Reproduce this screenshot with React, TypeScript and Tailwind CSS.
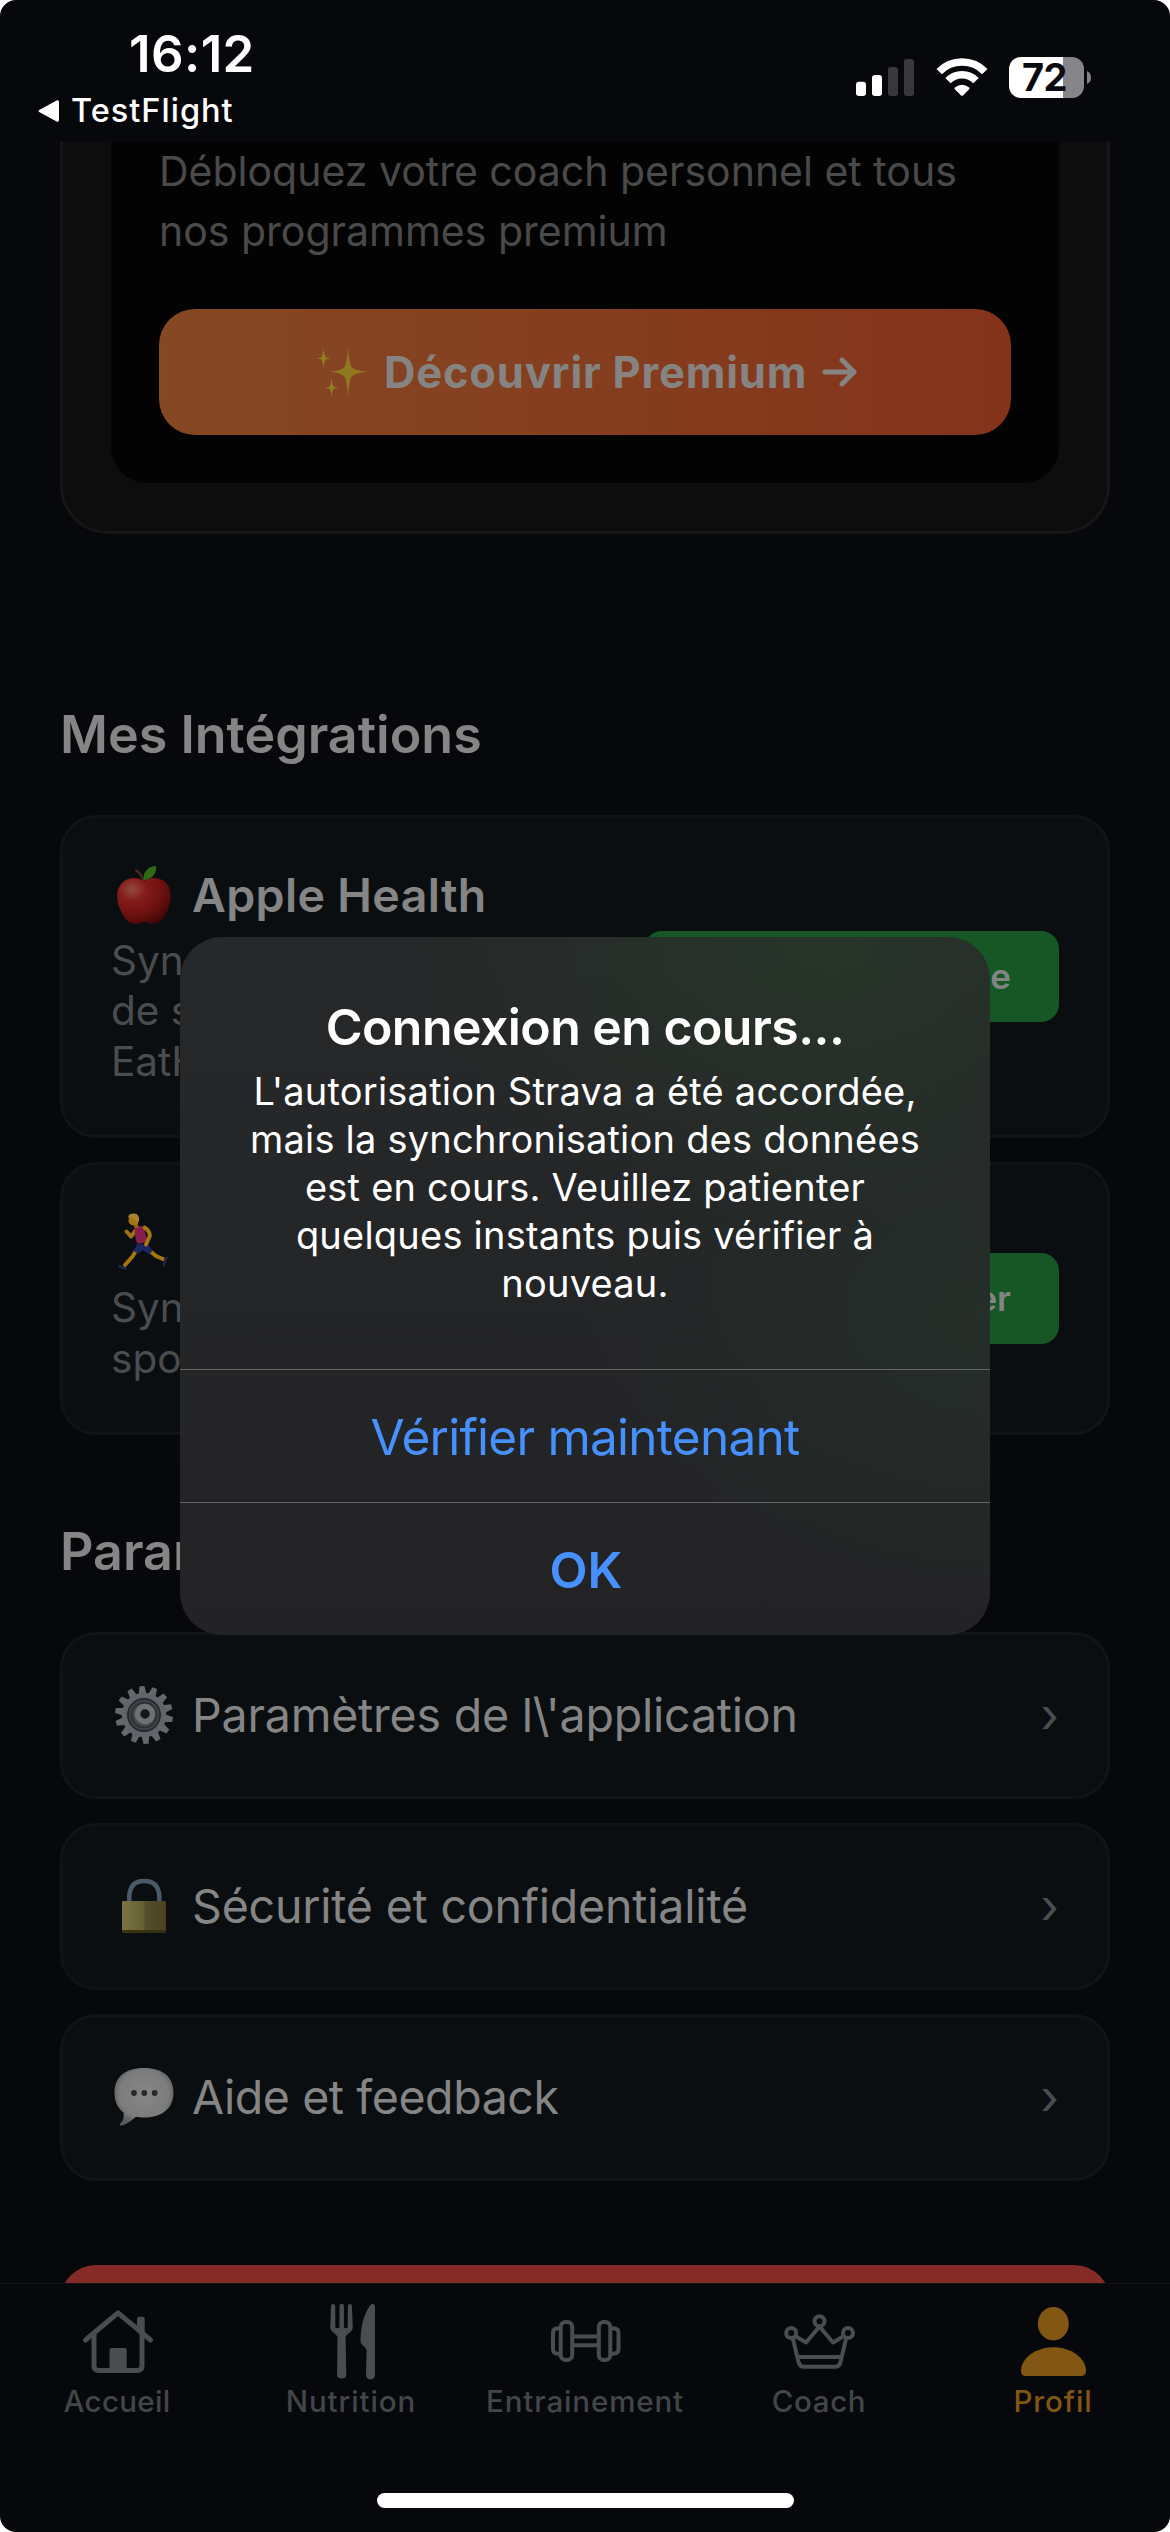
import type { ReactNode } from "react";

/* ---------- status bar ---------- */

function StatusBar() {
  return (
    <header className="flex h-[141px] shrink-0 justify-between pr-[79px] pl-[38px] text-white">
      <div className="flex flex-col pt-[28px]">
        <div className="ml-[91px] text-[51px] leading-[51px] font-semibold tracking-[0.4px]">16:12</div>
        <div className="mt-3 flex h-10 items-center">
          <svg width="22" height="24" viewBox="0 0 22 24">
            <path d="M1.2 11 L18.6 1.6 Q21 .6 21 3 V21 Q21 23.4 18.6 22.4 L1.2 13 Q-.2 12 1.2 11z" fill="#fff" />
          </svg>
          <span className="ml-[11px] text-[32.5px] leading-10 font-[450] tracking-[1px]">TestFlight</span>
        </div>
      </div>
      <div className="flex h-[41px] items-start pt-[57px]">
        <svg width="58" height="41" viewBox="0 0 58 41">
          <rect x="0" y="24.7" width="10" height="14.3" rx="3" fill="#fff" />
          <rect x="16" y="18" width="10" height="21" rx="3" fill="#fff" />
          <rect x="32" y="10" width="10" height="29" rx="3" fill="#39393c" />
          <rect x="48" y="2" width="10" height="37" rx="3" fill="#39393c" />
        </svg>
        <svg className="ml-[22px]" width="52" height="41" viewBox="0 0 52 41">
          <g fill="none" stroke="#fff" strokeWidth="7.6">
            <path d="M3.2 14.6 A32 32 0 0 1 48.8 14.6" />
            <path d="M12 23.6 A19.6 19.6 0 0 1 40 23.6" />
          </g>
          <path d="M18.8 30.6 Q26 24.8 33.2 30.6 Q34 31.4 33.2 32.2 L26.9 38.6 Q26 39.4 25.1 38.6 L18.8 32.2 Q18 31.4 18.8 30.6z" fill="#fff" />
        </svg>
        <div className="ml-[21px] flex h-[41px] w-[75px] items-center justify-center rounded-[12px] bg-linear-to-r from-white from-[72%] to-[#868689] to-[72%] pr-[4px] text-[38px] leading-[41px] font-bold tracking-[-0.5px] text-[#0a0b0f]">
          72
        </div>
        <svg className="mt-[14px] ml-[3px]" width="4" height="13" viewBox="0 0 4 13">
          <path d="M0 0 Q4 2 4 6.500 T0 13z" fill="#868689" />
        </svg>
      </div>
    </header>
  );
}

/* ---------- pictograms ---------- */

function Sparkles() {
  return (
    <svg width="54" height="52" viewBox="0 0 54 52" fill="#8f7f1f">
      <path d="M32 1 Q32.800 17 36 21.500 Q40 25 52 25.700 Q40 26.500 36 30 Q32.800 34 32 51 Q31.200 34 28 30 Q24 26.500 13 25.700 Q24 25 28 21.500 Q31.200 17 32 1z" opacity="0.9" />
      <path d="M7.500 1 Q8 10 10 11.500 L15 12.300 L10 13.300 Q8 15 7.500 24 Q7 15 5 13.300 L0 12.300 L5 11.500 Q7 10 7.500 1z" />
      <path d="M15.500 31 Q16 39.500 18 40.900 L23 41.700 L18 42.600 Q16 44 15.500 52 Q15 44 13 42.600 L8 41.700 L13 40.900 Q15 39.500 15.500 31z" />
    </svg>
  );
}

function AppleIcon() {
  return (
    <svg width="60" height="58" viewBox="0 0 60 58">
      <defs>
        <radialGradient id="apple" cx="0.28" cy="0.25" r="0.85">
          <stop offset="0" stopColor="#8f4a43" />
          <stop offset="0.3" stopColor="#851c19" />
          <stop offset="0.7" stopColor="#6a0f0f" />
          <stop offset="1" stopColor="#3d0606" />
        </radialGradient>
      </defs>
      <path
        d="M30 15 C36 11 44 11 50 15 C58 21 58.500 33 54 43 C50 53 45 58 39 58 C35 58 33.500 56 30 56 C26.500 56 25 58 21 58 C15 58 10 53 6 43 C1.500 33 2 21 10 15 C16 11 24 11 30 15z"
        fill="url(#apple)"
      />
      <path d="M29.500 15 Q28 8 21.500 4" fill="none" stroke="#4d2a1b" strokeWidth="2.200" />
      <path d="M30 14 C28 7 34 0 42 0 C43 8 38 13 30 14z" fill="#2f6a12" />
    </svg>
  );
}

function RunnerIcon() {
  return (
    <svg width="60" height="58" viewBox="0 0 60 58" fill="none" strokeLinecap="round" strokeLinejoin="round">
      <path d="M22 17 L17 23.500 L12.500 18.500" stroke="#9d7010" strokeWidth="4" />
      <path d="M22.500 37 L18.500 43.500 L11 52" stroke="#a37410" strokeWidth="4" />
      <path d="M36 38 L42 43 L50 46.500" stroke="#a37410" strokeWidth="4" />
      <path d="M21 13.500 Q27 11.500 30 14.500 L33 27 Q29 32 23 30 Q20 22 21 13.500z" fill="#861f4a" />
      <path d="M23.500 30.500 Q29 32.500 32.500 30 L38.500 37.500 L35 41.500 L29 37 L24 40.500 L19.500 38z" fill="#1c2566" />
      <path d="M30.500 14.500 Q36 18 35.800 23 L32 31.500" stroke="#a67612" strokeWidth="4" />
      <path d="M4.500 51.500 L13 54.500 L12 57 L4.500 54.500z" fill="#20283f" />
      <path d="M54 43.500 L50 54.500 L48.500 53 L50.500 45z" fill="#20283f" />
      <path d="M19 9 L24 8 L24 15 L20.500 15z" fill="#94670f" />
      <circle cx="19.500" cy="7.500" r="5" fill="#a67612" />
      <path d="M14 4.500 Q14.500 .3 20 .4 Q26 .6 25 8.500 L22 9 Q21.500 4.500 14 4.500z" fill="#a9842d" />
    </svg>
  );
}

const TEETH = Array.from({ length: 14 }, (_, i) => (i * 360) / 14);

function GearIcon() {
  return (
    <svg width="60" height="60" viewBox="0 0 60 60">
      <g fill="#62686c">
        {TEETH.map((angle) => (
          <path key={angle} d="M26 10 L27.500 1 H32.500 L34 10z" transform={`rotate(${angle - 4} 30 30)`} />
        ))}
      </g>
      <circle cx="30" cy="30" r="19.500" fill="#44484b" stroke="#5f656a" strokeWidth="5.500" />
      <circle cx="30" cy="30" r="16" fill="none" stroke="#25292c" strokeWidth="1.800" />
      <circle cx="30" cy="30" r="12.500" fill="none" stroke="#2d3134" strokeWidth="2" />
      <circle cx="31" cy="29" r="7.500" fill="#15181a" stroke="#6b7175" strokeWidth="5.500" />
    </svg>
  );
}

function LockIcon() {
  return (
    <svg width="60" height="60" viewBox="0 0 60 60">
      <defs>
        <linearGradient id="brass" x1="0" x2="1">
          <stop offset="0" stopColor="#7a7444" />
          <stop offset="0.5" stopColor="#655f36" />
          <stop offset="0.52" stopColor="#544f2d" />
          <stop offset="1" stopColor="#4b4320" />
        </linearGradient>
      </defs>
      <path d="M15.300 27 V20 Q16 5 30.200 5 Q44.500 5 45.300 20 V27" fill="none" stroke="#4b5a6b" strokeWidth="4.500" />
      <rect x="8" y="25" width="44" height="31.500" rx="1.500" fill="url(#brass)" />
      <rect x="8" y="54" width="44" height="2.500" rx="1" fill="#39300f" />
    </svg>
  );
}

function BubbleIcon() {
  return (
    <svg width="60" height="60" viewBox="0 0 60 60">
      <defs>
        <radialGradient id="bubble" cx="0.5" cy="0.45" r="0.56">
          <stop offset="0" stopColor="#868686" />
          <stop offset="0.75" stopColor="#7c7c7c" />
          <stop offset="1" stopColor="#585858" />
        </radialGradient>
      </defs>
      <path
        d="M30 1 C49 1 59.500 10 59.500 25.500 C59.500 41 49 50.500 30 50.500 C27 50.500 24.500 50.300 22 49.800 C18 53 12 58.500 6.500 58.500 C5.500 58.500 5.500 57.500 6.500 56.500 C9.500 53.500 10 49.500 9.500 45.500 C3.500 41 .5 34.500 .5 25.500 C.5 10 11 1 30 1z"
        fill="url(#bubble)"
      />
      <g fill="#26292b">
        <circle cx="20" cy="26" r="2.900" />
        <circle cx="30.300" cy="26" r="2.900" />
        <circle cx="40.700" cy="26" r="2.900" />
      </g>
    </svg>
  );
}

/* ---------- page content ---------- */

function PremiumCard() {
  return (
    <section className="rounded-b-[48px] border-x-[3px] border-b-[3px] border-[#161616] bg-[#0d0d0d] px-12 pb-12">
      <div className="rounded-b-[36px] bg-[#030303] px-12 pb-12">
        <p className="text-[41px] leading-[60px] whitespace-nowrap text-[#4a4a4a]">
          Débloquez votre coach personnel et tous
          <br />
          nos programmes premium
        </p>
        <button className="mt-12 flex h-[126px] w-full items-center rounded-[36px] bg-linear-to-r from-[#854823] to-[#84331a] pl-[157px] text-[#868482]">
          <Sparkles />
          <span className="ml-[14px] text-[43.5px] leading-[60px] font-bold tracking-[0.8px] whitespace-nowrap">Découvrir Premium</span>
          <svg className="ml-[15px]" width="36" height="30" viewBox="0 0 36 30" fill="none" stroke="currentColor" strokeWidth="5" strokeLinecap="round" strokeLinejoin="round">
            <path d="M3 15 H32 M20 3 L32 15 L20 27" />
          </svg>
        </button>
      </div>
    </section>
  );
}

type IntegrationProps = { icon: ReactNode; title: string; lines: string[]; action: string; wide?: boolean };

function IntegrationCard({ icon, title, lines, action, wide }: IntegrationProps) {
  return (
    <article
      className={`flex items-center justify-between rounded-[36px] border-[3px] border-[#101416] bg-[#0a0e10] px-12 ${wide ? "h-[323px]" : "h-[273px]"}`}
    >
      <div>
        <h3 className="flex h-[58px] items-center pl-[3px]">
          {icon}
          <span className="ml-[18px] text-[46.5px] leading-[58px] font-semibold tracking-[0.35px] text-[#858585]">{title}</span>
        </h3>
        <p className="mt-3 text-[40.5px] leading-[50.5px] text-[#4a4d4f]">
          {lines.map((line) => (
            <span key={line} className="block">
              {line}
            </span>
          ))}
        </p>
      </div>
      <button
        className={`mb-px flex h-[91px] items-center justify-end rounded-[18px] bg-[#165725] pr-12 text-[35px] font-semibold text-[#838584] ${wide ? "w-[415px]" : "w-[280px]"}`}
      >
        {action}
      </button>
    </article>
  );
}

function SettingRow({ icon, label, tracking }: { icon: ReactNode; label: string; tracking: string }) {
  return (
    <li className="flex h-[167px] items-center rounded-[36px] border-[3px] border-[#101416] bg-[#0a0e10] pr-[48px] pb-px pl-[51px]">
      {icon}
      <span className={`ml-[18px] flex-1 text-[46.5px] leading-[60px] whitespace-nowrap text-[#858585] ${tracking}`}>{label}</span>
      <span className="text-[48px] leading-[60px] text-[#4b4e50]">›</span>
    </li>
  );
}

/* ---------- tab bar ---------- */

const iconStroke = { fill: "none", stroke: "currentColor", strokeLinejoin: "round", strokeLinecap: "round" } as const;

function TabIcon({ children }: { children: ReactNode }) {
  return (
    <svg width="90" height="80" viewBox="0 0 90 80">
      {children}
    </svg>
  );
}

const HomeIcon = (
  <TabIcon>
    <g {...iconStroke} strokeWidth="5">
      <path d="M13.500 40 L46 12.800 L78.500 40" />
      <path d="M22 34 V65.500 Q22 70.500 27 70.500 H65 Q70 70.500 70 65.500 V34" />
    </g>
    <rect x="37.500" y="48" width="17.200" height="24" rx="2" fill="currentColor" />
    <path d="M65 29 V19 Q65 16.700 67.300 16.700 H70.400 Q72.700 16.700 72.700 19 V36z" fill="currentColor" />
  </TabIcon>
);

const NutritionIcon = (
  <TabIcon>
    <g fill="currentColor">
      <path d="M25 6 L24.300 27 C24.300 33 31.500 33 31.500 38 L31 75.500 A4.700 3.500 0 0 0 40.300 75.500 L39.600 38 C39.600 33 46.800 33 46.800 27 L45.900 6 A2 2 0 0 0 41.900 6 L41.700 27.500 Q40 29 37.900 27.500 V6 A2.100 2.100 0 0 0 33.500 6 V27.500 Q31 29 29.400 27.500 L29.200 6 A2.100 2.100 0 0 0 25 6z" />
      <path d="M69 6 A2.500 2.500 0 0 0 64.500 5 C57 14 54.500 30 54.500 41 C54.500 46 60.600 46 60.600 51 L60 75 A4.500 4.500 0 0 0 69 75z" />
    </g>
  </TabIcon>
);

const TrainingIcon = (
  <TabIcon>
    <g {...iconStroke} strokeWidth="4">
      <rect x="20.700" y="22" width="11.500" height="38" rx="5" />
      <rect x="58.800" y="22" width="11.500" height="38" rx="5" />
      <path d="M20 28.300 H18 Q13 28.300 13 33 V49 Q13 53.700 18 53.700 H20" />
      <path d="M71 28.300 H73 Q78.500 28.300 78.500 33 V49 Q78.500 53.700 73 53.700 H71" />
      <path d="M33 36.500 H58 M33 45.300 H58" />
    </g>
  </TabIcon>
);

const CoachIcon = (
  <TabIcon>
    <g {...iconStroke} strokeWidth="4">
      <circle cx="45.500" cy="21.300" r="5" />
      <circle cx="17.200" cy="33" r="5" />
      <circle cx="74" cy="33" r="5" />
      <path d="M22 36.500 L32 42.500 L45.500 26.500 L59 42.500 L69 36.500" />
      <path d="M19 39 L24.500 62 Q25.500 66.700 30 66.700 H61 Q65.500 66.700 66.500 62 L72 39" />
      <path d="M24.500 57 H66.500" />
    </g>
  </TabIcon>
);

const ProfileIcon = (
  <TabIcon>
    <g fill="currentColor">
      <ellipse cx="45.300" cy="23.700" rx="15.500" ry="16.700" />
      <path d="M13 71 C13 58 28 47.300 45.500 47.300 S78 58 78 71 Q78 76 73 76 H18 Q13 76 13 71z" />
    </g>
  </TabIcon>
);

const TABS = [
  { label: "Accueil", icon: HomeIcon, tracking: "tracking-[0.3px]" },
  { label: "Nutrition", icon: NutritionIcon, tracking: "tracking-[0.9px]" },
  { label: "Entrainement", icon: TrainingIcon, tracking: "tracking-[0.87px]" },
  { label: "Coach", icon: CoachIcon, tracking: "tracking-[0.65px]" },
  { label: "Profil", icon: ProfileIcon, tracking: "tracking-[0.9px]" },
];

function TabBar() {
  return (
    <nav className="flex h-[249px] shrink-0 flex-col items-center border-t border-[#121315]">
      <div className="grid w-full grid-cols-5 pt-4">
        {TABS.map(({ label, icon, tracking }) => (
          <div key={label} className={`flex flex-col items-center ${label === "Profil" ? "text-[#815713]" : "text-[#484d4f]"}`}>
            {icon}
            <span
              className={`mt-[3px] text-[29.5px] leading-9 font-medium ${tracking} ${label === "Profil" ? "text-[#815713]" : "text-[#424648]"}`}
            >
              {label}
            </span>
          </div>
        ))}
      </div>
      <div className="mt-[74px] h-[15px] w-[417px] rounded-full bg-white" />
    </nav>
  );
}

/* ---------- alert ---------- */

function Alert() {
  return (
    <div
      role="alertdialog"
      className="absolute top-[937px] left-[180px] w-[810px] overflow-hidden rounded-[42px] bg-[#252628] bg-[radial-gradient(ellipse_400px_290px_at_80%_0%,#273529_0%,transparent_100%),radial-gradient(ellipse_400px_300px_at_100%_54%,#252e29_0%,transparent_100%),linear-gradient(180deg,#272829_0%,#242527_55%,#232325_100%)] text-center"
    >
      <div className="pt-[60px] pb-[62px] text-white">
        <h2 className="text-[50px] leading-[60px] font-semibold tracking-[-0.55px]">Connexion en cours...</h2>
        <p className="mt-[10px] text-[38px] leading-[48px] tracking-[0.22px] whitespace-nowrap">
          L'autorisation Strava a été accordée,
          <br />
          mais la synchronisation des données
          <br />
          est en cours. Veuillez patienter
          <br />
          quelques instants puis vérifier à
          <br />
          nouveau.
        </p>
      </div>
      <button className="block h-[133px] w-full border-t border-[#636665] pt-[2px] text-[49.5px] tracking-[-0.75px] text-[#4691fd]">
        Vérifier maintenant
      </button>
      <button className="block h-[133px] w-full border-t border-[#636465] pt-[2px] pl-[2px] text-[49.5px] font-semibold text-[#4691fd]">OK</button>
    </div>
  );
}

export default function App() {
  return (
    <div className="h-[2532px] w-[1170px] bg-white font-['Inter',sans-serif]">
      <div className="relative flex h-full flex-col overflow-hidden rounded-[16px] bg-[#07080c]">
        <StatusBar />
        <main className="h-[2142px] shrink-0 overflow-hidden px-[60px]">
          <PremiumCard />

          <h2 className="mt-[169px] text-[52px] leading-[64px] font-semibold text-[#858585]">Mes Intégrations</h2>
          <div className="mt-12 flex flex-col gap-6">
            <IntegrationCard icon={<AppleIcon />} title="Apple Health" lines={["Syn", "de s", "EatH"]} action="e" wide />
            <IntegrationCard icon={<RunnerIcon />} title="" lines={["Syn", "spo"]} action="er" />
          </div>

          <h2 className="mt-[85px] text-[52px] leading-[64px] font-semibold text-[#858585]">Param</h2>
          <ul className="mt-12 flex flex-col gap-6">
            <SettingRow icon={<GearIcon />} label={"Paramètres de l\\'application"} tracking="tracking-[-0.2px]" />
            <SettingRow icon={<LockIcon />} label="Sécurité et confidentialité" tracking="tracking-[-0.2px]" />
            <SettingRow icon={<BubbleIcon />} label="Aide et feedback" tracking="tracking-[-0.42px]" />
          </ul>

          <div className="mt-[84px] h-[160px] rounded-[36px] bg-[#842a27]" />
        </main>
        <TabBar />
        <Alert />
      </div>
    </div>
  );
}
